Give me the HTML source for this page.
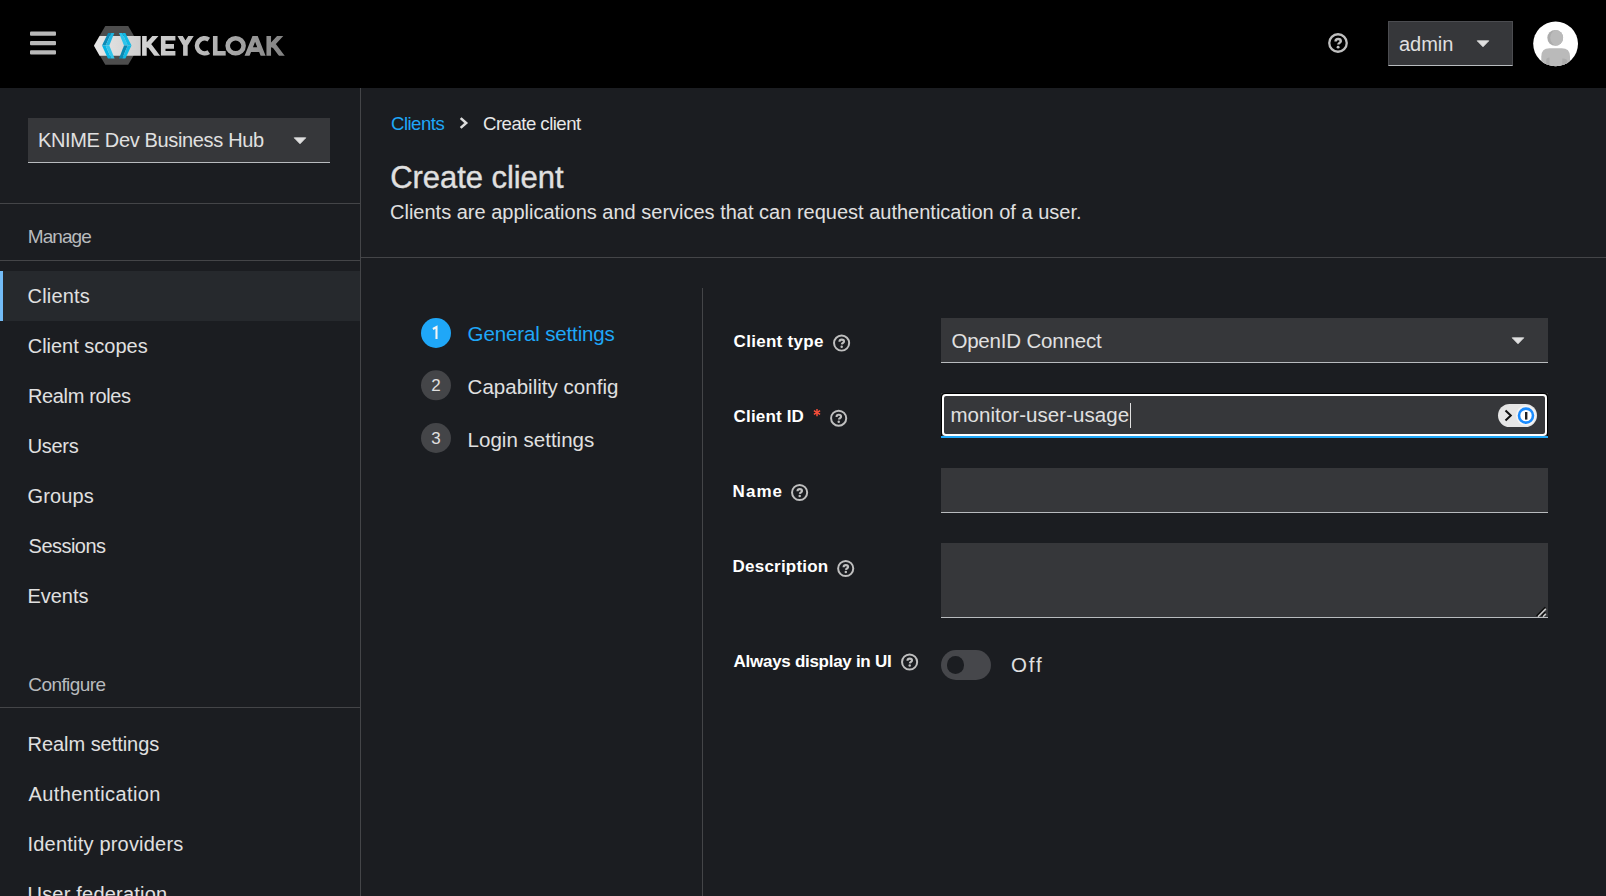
<!DOCTYPE html>
<html>
<head>
<meta charset="utf-8">
<title>Create client - Keycloak</title>
<style>
html,body{margin:0;padding:0;width:1606px;height:896px;overflow:hidden;background:#1b1d21;font-family:"Liberation Sans",sans-serif;}
.a{position:absolute;box-sizing:border-box;}
.t{position:absolute;white-space:nowrap;line-height:1;font-family:"Liberation Sans",sans-serif;}
svg{position:absolute;overflow:visible;}
</style>
</head>
<body>
<!-- header -->
<div class="a" style="left:0;top:0;width:1606px;height:88px;background:#000"></div>
<svg style="left:0;top:0" width="1606" height="88">
  <!-- hamburger -->
  <rect x="30" y="31.5" width="26" height="4.3" rx="1" fill="#b9b9b9"/>
  <rect x="30" y="40.9" width="26" height="4.3" rx="1" fill="#b9b9b9"/>
  <rect x="30" y="50.3" width="26" height="4.3" rx="1" fill="#b9b9b9"/>
  <!-- logo -->
  <defs>
    <linearGradient id="bar" x1="0" x2="1" y1="0" y2="0">
      <stop offset="0" stop-color="#e8e8e8"/><stop offset="1" stop-color="#cfcfcf"/>
    </linearGradient>
    <linearGradient id="kc" gradientUnits="userSpaceOnUse" x1="142" x2="284" y1="0" y2="0">
      <stop offset="0" stop-color="#d4d4d4"/><stop offset="0.5" stop-color="#b4b4b4"/><stop offset="1" stop-color="#828282"/>
    </linearGradient>
  </defs>
  <polygon points="105.3,26 128.2,26 139.6,45.4 128.2,64.7 105.3,64.7 93.9,45.4" fill="#4d4d4d"/>
  <polygon points="99.6,36 140.7,36 140.7,55.7 99.6,55.7 94,45.85" fill="url(#bar)"/>
  <!-- chevrons -->
  <polygon points="108.1,33.1 111.3,33.1 105.6,45.5 102.0,45.5" fill="#0c8ab6"/>
  <polygon points="111.3,33.1 114.3,33.1 109.3,45.5 105.6,45.5" fill="#1cb6e2"/>
  <polygon points="102.0,45.5 105.6,45.5 111.3,58.5 107.9,58.5" fill="#06b4e4"/>
  <polygon points="105.6,45.5 109.3,45.5 114.6,58.5 111.3,58.5" fill="#30c4ea"/>
  <polygon points="119.0,33.1 122.2,33.1 127.7,45.5 124.0,45.5" fill="#2cc4ec"/>
  <polygon points="122.2,33.1 125.3,33.1 131.5,45.5 127.7,45.5" fill="#10b9e6"/>
  <polygon points="124.0,45.5 127.7,45.5 122.3,58.5 119.0,58.5" fill="#0a88b2"/>
  <polygon points="127.7,45.5 131.5,45.5 125.4,58.5 122.3,58.5" fill="#12b8e4"/>
  <!-- KEYCLOAK letters -->
  <clipPath id="kcc"><rect x="140" y="36" width="150" height="19.7"/></clipPath>
  <g clip-path="url(#kcc)" fill="none" stroke="url(#kc)" stroke-width="4.6" stroke-linejoin="miter">
    <path d="M144.4,30 V62 M157.2,34 L146,46.5 M148.6,44.4 L158.6,57.6"/>
    <path d="M175.4,38.3 H163.2 V53.4 H175.4 M163.2,46.4 H174"/>
    <path d="M178.6,33.5 L185.4,44.8 L192.6,33.5 M185.4,44.8 V62"/>
    <path d="M208.8,39.6 A7.55,7.55 0 1 0 208.8,52.1"/>
    <path d="M215.25,30 V53.4 H225.7"/>
    <ellipse cx="235.65" cy="45.85" rx="7.95" ry="7.55"/>
    <path d="M246.2,58 L255.1,35.6 L264.0,58 M249,49.6 H261.2"/>
    <path d="M268.75,30 V62 M282.0,34 L270.5,46.5 M273.2,44.4 L283.2,57.6"/>
  </g>
  <!-- help icon -->
  <circle cx="1338" cy="43" r="8.75" fill="none" stroke="#bfbfbf" stroke-width="2.30"/>
  <path d="M1335.57,41.55 C1335.57,39.93 1336.74,39.08 1338.18,39.08 C1339.71,39.08 1340.79,40.02 1340.79,41.19 C1340.79,42.72 1338.45,42.99 1338.32,44.52" fill="none" stroke="#bfbfbf" stroke-width="2.45"/>
  <circle cx="1338.10" cy="47.15" r="1.45" fill="#bfbfbf"/>
  <!-- avatar -->
  <circle cx="1555.6" cy="43.85" r="22.4" fill="#fff"/>
  <clipPath id="av"><circle cx="1555.6" cy="43.85" r="22.4"/></clipPath>
  <clipPath id="hd"><circle cx="1555.2" cy="37.8" r="7.9"/></clipPath>
  <g clip-path="url(#av)">
    <circle cx="1555.2" cy="37.8" r="7.9" fill="#acacac"/>
    <circle cx="1558.6" cy="37.8" r="8.4" fill="#bababa" clip-path="url(#hd)"/>
    <path d="M1541.3,72 L1541.3,56.5 Q1541.3,48.2 1549.6,48.2 L1561.7,48.2 Q1570,48.2 1570,56.5 L1570,72 Z" fill="#bababa"/>
    <path d="M1546.3,72 V60 Q1546.3,57.4 1549.5,57.4 V72 Z" fill="#acacac"/>
    <path d="M1567.3,72 V61 Q1567.3,58.4 1562.3,58.4 V72 Z" fill="#acacac"/>
  </g>
</svg>
<!-- admin dropdown -->
<div class="a" style="left:1388px;top:21px;width:125px;height:45px;background:#36373a;border:1px solid #4b4c50;border-bottom-color:#b8bbbe"></div>
<svg style="left:0;top:0" width="1606" height="88">
  <polygon points="1477.2,40.8 1488.8,40.8 1483,46.8" fill="#e0e0e0" stroke="#e0e0e0" stroke-width="0.8" stroke-linejoin="round"/>
</svg>

<!-- sidebar -->
<div class="a" style="left:360px;top:88px;width:1px;height:808px;background:#444548"></div>
<div class="a" style="left:28px;top:118px;width:302px;height:45px;background:#36373a;border-bottom:1px solid #b8bbbe"></div>
<svg style="left:0;top:0" width="360" height="200">
  <polygon points="294.2,137.8 305.8,137.8 300,143.8" fill="#e0e0e0" stroke="#e0e0e0" stroke-width="0.8" stroke-linejoin="round"/>
</svg>
<div class="a" style="left:0;top:203px;width:360px;height:1px;background:#444548"></div>
<div class="a" style="left:0;top:260px;width:360px;height:1px;background:#444548"></div>
<div class="a" style="left:0;top:271px;width:360px;height:50px;background:#26292d"></div>
<div class="a" style="left:0;top:271px;width:3px;height:50px;background:#73bcf7"></div>
<div class="a" style="left:0;top:707px;width:360px;height:1px;background:#444548"></div>

<!-- main -->
<div class="a" style="left:361px;top:257px;width:1245px;height:1px;background:#444548"></div>
<svg style="left:0;top:0" width="1606" height="896">
  <!-- breadcrumb chevron -->
  <polyline points="461.6,118.9 466.2,123 461.6,127.1" fill="none" stroke="#dcdcdc" stroke-width="2.5" stroke-linecap="square"/>
</svg>
<div class="a" style="left:702px;top:288px;width:1px;height:608px;background:#444548"></div>
<!-- steps -->
<svg style="left:0;top:0" width="1606" height="896">
  <circle cx="436" cy="333" r="15" fill="#1fa7f8"/>
  <circle cx="436" cy="385.3" r="15" fill="#444548"/>
  <circle cx="436" cy="438" r="15" fill="#444548"/>
  <path d="M432.9,329.0 L436.5,327.0 V339" fill="none" stroke="#f4f4f4" stroke-width="2.1"/>
  <text x="436" y="390.8" font-family="Liberation Sans" font-size="17" fill="#e0e0e0" text-anchor="middle">2</text>
  <text x="436" y="443.5" font-family="Liberation Sans" font-size="17" fill="#e0e0e0" text-anchor="middle">3</text>
</svg>

<!-- form inputs -->
<div class="a" style="left:941px;top:318px;width:607px;height:45px;background:#36373a;border-bottom:1px solid #b8bbbe"></div>
<svg style="left:0;top:0" width="1606" height="896">
  <polygon points="1512.2,337.8 1523.8,337.8 1518,343.8" fill="#e0e0e0" stroke="#e0e0e0" stroke-width="0.8" stroke-linejoin="round"/>
</svg>
<div class="a" style="left:941px;top:393px;width:607px;height:45px;background:#36373a;border-bottom:2px solid #1fa7f8"></div>
<div class="a" style="left:941px;top:393px;width:607px;height:43px;border:1px solid #000;border-bottom:none;border-radius:4px 4px 0 0"></div>
<div class="a" style="left:942px;top:394px;width:605px;height:42px;border:2px solid #fff;border-radius:4px"></div>
<div class="a" style="left:1130px;top:402.5px;width:1px;height:25px;background:#e0e0e0"></div>
<!-- 1password pill -->
<svg style="left:0;top:0" width="1606" height="896">
  <rect x="1498" y="404" width="39" height="23" rx="11.5" fill="#e6e6e6"/>
  <circle cx="1526" cy="415.6" r="10" fill="#f4f4f4"/>
  <polyline points="1505.5,410.5 1510.8,415.5 1505.5,420.5" fill="none" stroke="#111" stroke-width="2"/>
  <circle cx="1526" cy="415.6" r="7" fill="#fff" stroke="#1a8cff" stroke-width="2.6"/>
  <rect x="1525" y="412" width="2.4" height="7.6" fill="#222"/>
</svg>
<div class="a" style="left:941px;top:468px;width:607px;height:45px;background:#36373a;border-bottom:1px solid #b8bbbe"></div>
<div class="a" style="left:941px;top:543px;width:607px;height:75px;background:#36373a;border-bottom:1px solid #b8bbbe"></div>
<svg style="left:0;top:0" width="1606" height="896">
  <line x1="1545.3" y1="607.3" x2="1536.6" y2="616" stroke="#0a0a0a" stroke-width="1.6"/>
  <line x1="1545.8" y1="608.9" x2="1538" y2="616.7" stroke="#c8c8c8" stroke-width="1.6"/>
  <line x1="1545.3" y1="612.3" x2="1541.6" y2="616" stroke="#0a0a0a" stroke-width="1.6"/>
  <line x1="1545.8" y1="613.9" x2="1543" y2="616.7" stroke="#c8c8c8" stroke-width="1.6"/>
</svg>
<!-- toggle -->
<div class="a" style="left:941px;top:650px;width:50px;height:30px;border-radius:15px;background:#46474b"></div>
<div class="a" style="left:946.8px;top:656.2px;width:17.4px;height:17.4px;border-radius:50%;background:#1b1d21"></div>
<!-- asterisk + help icons -->
<svg style="left:0;top:0" width="1606" height="896">
  <g stroke="#fe4f3a" stroke-width="1.45"><line x1="817" y1="408.9" x2="817" y2="416.2"/><line x1="813.9" y1="410.7" x2="820.1" y2="414.4"/><line x1="813.9" y1="414.4" x2="820.1" y2="410.7"/></g>
  <g id="h1" fill="none" stroke="#c4c4c4">
  </g>
</svg>
<svg style="left:0;top:0" width="1606" height="896">
  <circle cx="841.6" cy="343.05" r="7.57" fill="none" stroke="#bfbfbf" stroke-width="1.99"/>
  <path d="M839.50,341.80 C839.50,340.39 840.51,339.65 841.76,339.65 C843.08,339.65 844.01,340.47 844.01,341.48 C844.01,342.81 841.99,343.04 841.87,344.36" fill="none" stroke="#bfbfbf" stroke-width="2.12"/>
  <circle cx="841.69" cy="346.64" r="1.25" fill="#bfbfbf"/>
  <circle cx="838.65" cy="418.2" r="7.57" fill="none" stroke="#bfbfbf" stroke-width="1.99"/>
  <path d="M836.55,416.95 C836.55,415.54 837.56,414.80 838.81,414.80 C840.13,414.80 841.06,415.62 841.06,416.63 C841.06,417.96 839.04,418.19 838.92,419.51" fill="none" stroke="#bfbfbf" stroke-width="2.12"/>
  <circle cx="838.74" cy="421.79" r="1.25" fill="#bfbfbf"/>
  <circle cx="799.6" cy="492.5" r="7.57" fill="none" stroke="#bfbfbf" stroke-width="1.99"/>
  <path d="M797.50,491.25 C797.50,489.84 798.51,489.10 799.76,489.10 C801.08,489.10 802.01,489.92 802.01,490.93 C802.01,492.26 799.99,492.49 799.87,493.81" fill="none" stroke="#bfbfbf" stroke-width="2.12"/>
  <circle cx="799.69" cy="496.09" r="1.25" fill="#bfbfbf"/>
  <circle cx="845.7" cy="568.5" r="7.57" fill="none" stroke="#bfbfbf" stroke-width="1.99"/>
  <path d="M843.60,567.25 C843.60,565.84 844.61,565.10 845.86,565.10 C847.18,565.10 848.11,565.92 848.11,566.93 C848.11,568.26 846.09,568.49 845.97,569.81" fill="none" stroke="#bfbfbf" stroke-width="2.12"/>
  <circle cx="845.79" cy="572.09" r="1.25" fill="#bfbfbf"/>
  <circle cx="909.6" cy="662" r="7.57" fill="none" stroke="#bfbfbf" stroke-width="1.99"/>
  <path d="M907.50,660.75 C907.50,659.34 908.51,658.60 909.76,658.60 C911.08,658.60 912.01,659.42 912.01,660.43 C912.01,661.76 909.99,661.99 909.87,663.31" fill="none" stroke="#bfbfbf" stroke-width="2.12"/>
  <circle cx="909.69" cy="665.59" r="1.25" fill="#bfbfbf"/>
</svg>

<div class="t" style="left:1399.00px;top:34.00px;font-size:20px;font-weight:400;color:#e0e0e0;letter-spacing:-0.012px;">admin</div>
<div class="t" style="left:38.00px;top:130.00px;font-size:20px;font-weight:400;color:#e0e0e0;letter-spacing:-0.347px;">KNIME Dev Business Hub</div>
<div class="t" style="left:27.80px;top:227.00px;font-size:19px;font-weight:400;color:#b8bbbe;letter-spacing:-0.939px;">Manage</div>
<div class="t" style="left:27.60px;top:286.00px;font-size:20px;font-weight:400;color:#e0e0e0;letter-spacing:0.178px;">Clients</div>
<div class="t" style="left:27.70px;top:336.00px;font-size:20px;font-weight:400;color:#e0e0e0;letter-spacing:-0.005px;">Client scopes</div>
<div class="t" style="left:28.00px;top:386.00px;font-size:20px;font-weight:400;color:#e0e0e0;letter-spacing:-0.370px;">Realm roles</div>
<div class="t" style="left:27.70px;top:436.00px;font-size:20px;font-weight:400;color:#e0e0e0;letter-spacing:-0.307px;">Users</div>
<div class="t" style="left:27.60px;top:486.00px;font-size:20px;font-weight:400;color:#e0e0e0;letter-spacing:0.103px;">Groups</div>
<div class="t" style="left:28.60px;top:536.00px;font-size:20px;font-weight:400;color:#e0e0e0;letter-spacing:-0.536px;">Sessions</div>
<div class="t" style="left:27.60px;top:586.00px;font-size:20px;font-weight:400;color:#e0e0e0;letter-spacing:-0.069px;">Events</div>
<div class="t" style="left:28.30px;top:675.00px;font-size:19px;font-weight:400;color:#b8bbbe;letter-spacing:-0.589px;">Configure</div>
<div class="t" style="left:27.50px;top:734.00px;font-size:20px;font-weight:400;color:#e0e0e0;letter-spacing:-0.037px;">Realm settings</div>
<div class="t" style="left:28.50px;top:784.00px;font-size:20px;font-weight:400;color:#e0e0e0;letter-spacing:0.397px;">Authentication</div>
<div class="t" style="left:27.50px;top:834.00px;font-size:20px;font-weight:400;color:#e0e0e0;letter-spacing:0.206px;">Identity providers</div>
<div class="t" style="left:27.50px;top:884.00px;font-size:20px;font-weight:400;color:#e0e0e0;letter-spacing:0.206px;">User federation</div>
<div class="t" style="left:391.00px;top:115.00px;font-size:18.6px;font-weight:400;color:#1fa7f8;letter-spacing:-0.523px;">Clients</div>
<div class="t" style="left:483.00px;top:115.00px;font-size:18.6px;font-weight:400;color:#e8e8e8;letter-spacing:-0.518px;">Create client</div>
<div class="t" style="left:390.20px;top:162.00px;font-size:31px;font-weight:400;color:#e0e0e0;letter-spacing:-0.051px;-webkit-text-stroke:0.35px #e0e0e0;">Create client</div>
<div class="t" style="left:390.00px;top:201.50px;font-size:20px;font-weight:400;color:#e0e0e0;letter-spacing:0.000px;">Clients are applications and services that can request authentication of a user.</div>
<div class="t" style="left:467.60px;top:323.50px;font-size:20.5px;font-weight:400;color:#1fa7f8;letter-spacing:-0.135px;">General settings</div>
<div class="t" style="left:467.60px;top:377.00px;font-size:20.5px;font-weight:400;color:#e0e0e0;letter-spacing:0.024px;">Capability config</div>
<div class="t" style="left:467.60px;top:429.50px;font-size:20.5px;font-weight:400;color:#e0e0e0;letter-spacing:0.011px;">Login settings</div>
<div class="t" style="left:733.60px;top:333.00px;font-size:17px;font-weight:700;color:#ffffff;letter-spacing:0.285px;">Client type</div>
<div class="t" style="left:733.60px;top:408.00px;font-size:17px;font-weight:700;color:#ffffff;letter-spacing:0.166px;">Client ID</div>
<div class="t" style="left:732.60px;top:483.00px;font-size:17px;font-weight:700;color:#ffffff;letter-spacing:1.051px;">Name</div>
<div class="t" style="left:732.60px;top:558.00px;font-size:17px;font-weight:700;color:#ffffff;letter-spacing:0.207px;">Description</div>
<div class="t" style="left:733.60px;top:653.00px;font-size:17px;font-weight:700;color:#ffffff;letter-spacing:-0.285px;">Always display in UI</div>
<div class="t" style="left:951.40px;top:330.50px;font-size:20.5px;font-weight:400;color:#e0e0e0;letter-spacing:-0.185px;">OpenID Connect</div>
<div class="t" style="left:950.40px;top:405.40px;font-size:20.5px;font-weight:400;color:#e0e0e0;letter-spacing:0.062px;">monitor-user-usage</div>
<div class="t" style="left:1011.00px;top:655.00px;font-size:20.5px;font-weight:400;color:#e0e0e0;letter-spacing:1.865px;">Off</div>
</body>
</html>
